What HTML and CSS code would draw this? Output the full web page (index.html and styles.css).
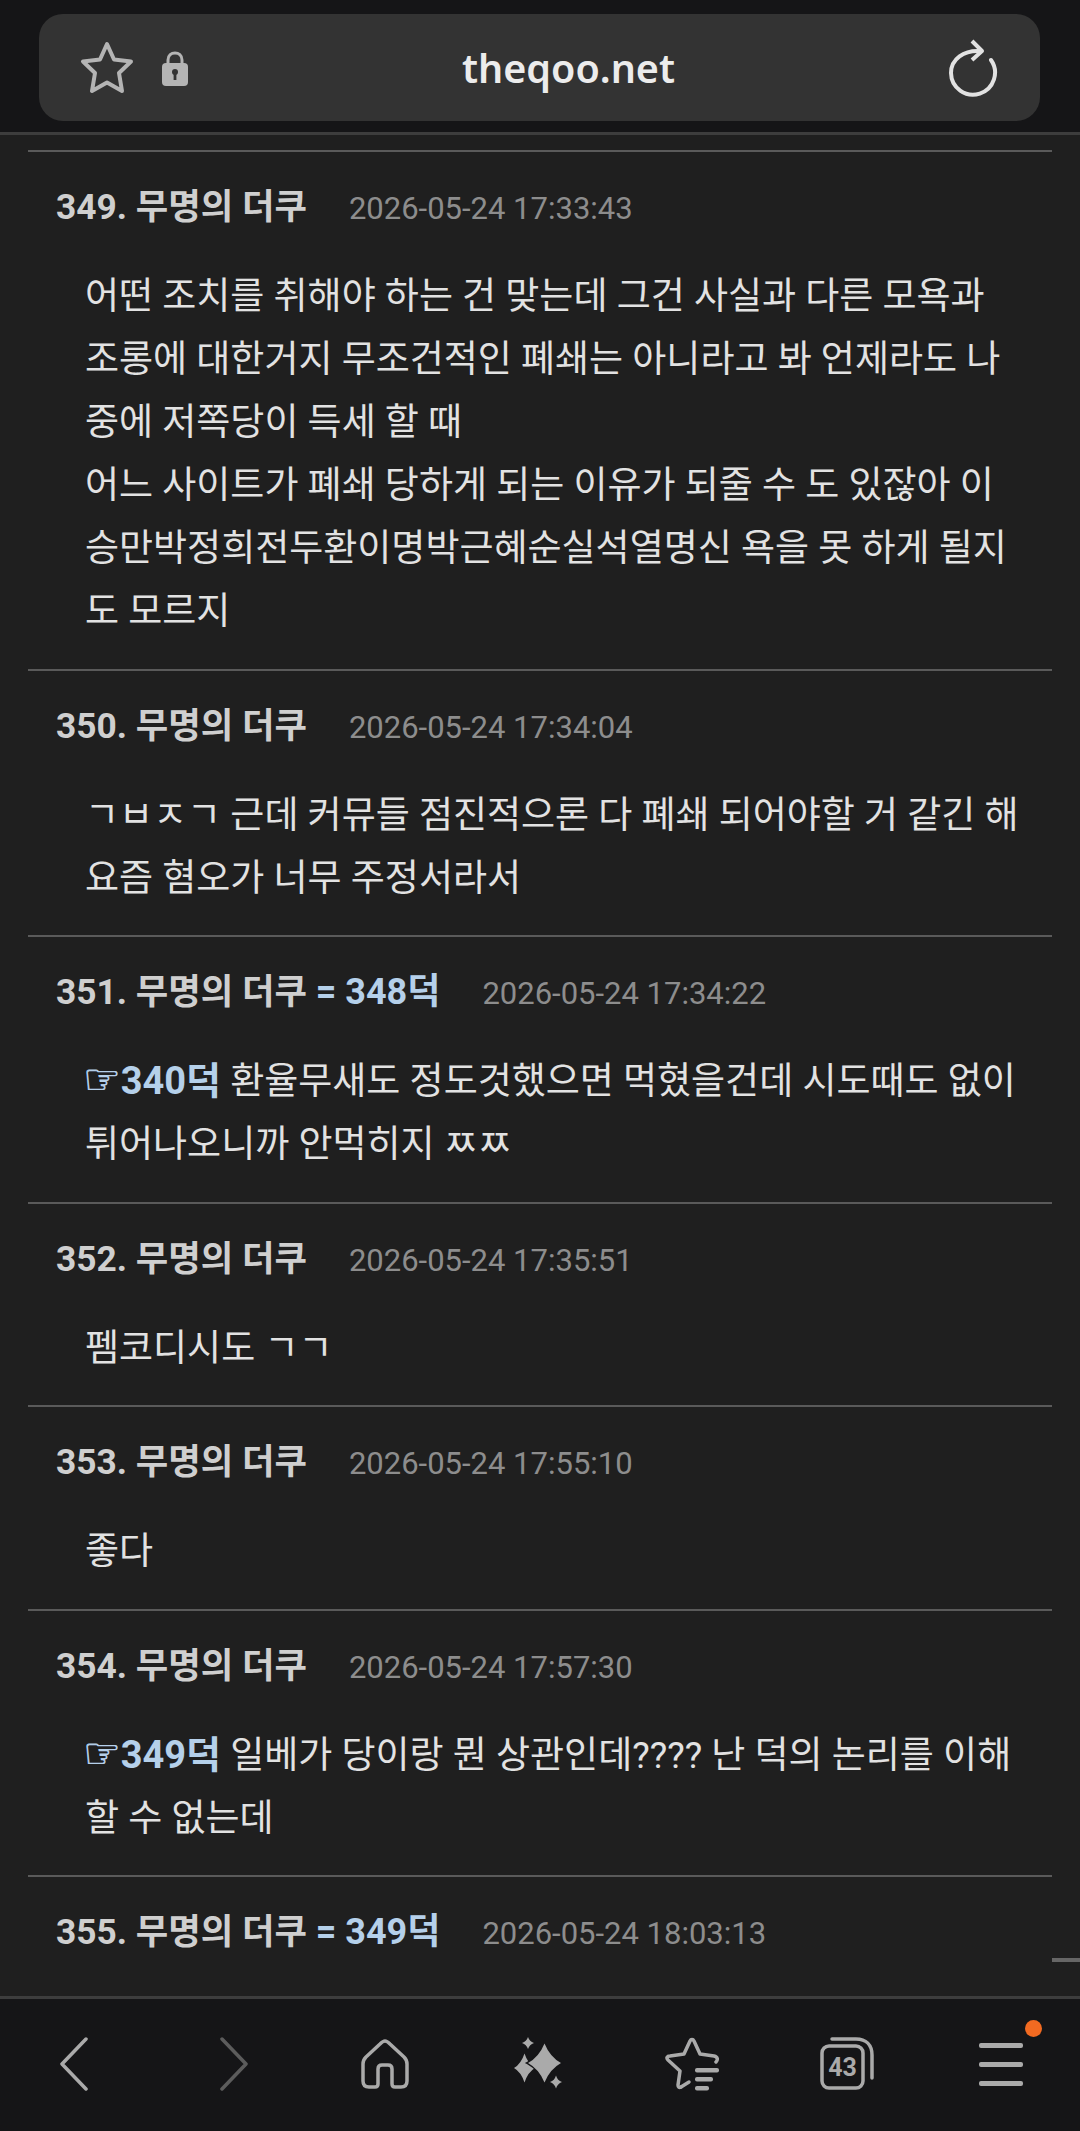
FILE: index.html
```html
<!DOCTYPE html>
<html lang="ko">
<head>
  <meta charset="UTF-8">
  <meta name="viewport" content="width=device-width, initial-scale=1.0">
  <title>theqoo.net</title>
  <link rel="stylesheet" href="styles.css">
</head>
<body>

  <header class="top-bar">
    <div class="address-bar">
      <svg class="icon-star" width="54" height="54" viewBox="0 0 54 54">
        <path d="M27 3 L34 18.5 L51 20.5 L39 32 L42 50 L27 41.5 L12 50 L15 32 L3 20.5 L20 18.5 Z" fill="none" stroke="#b4b4b4" stroke-width="4" stroke-linejoin="round"/>
      </svg>
      <svg class="icon-lock" width="26" height="36" viewBox="0 0 26 36">
        <path d="M6 15 V10 C6 0.5 20 0.5 20 10 V15" fill="none" stroke="#b4b4b4" stroke-width="3"/>
        <rect x="0" y="13" width="26" height="23" rx="4" fill="#b4b4b4"/>
        <circle cx="13" cy="22" r="3" fill="#333"/>
        <rect x="11.6" y="22" width="2.8" height="8" fill="#333"/>
      </svg>
      <span class="site-name">theqoo.net</span>
      <svg class="icon-reload" width="50" height="58" viewBox="0 0 50 58">
        <path d="M31 12 C15 11 2 20 2 34 A22 22 0 1 0 42 21" fill="none" stroke="#e2e2e2" stroke-width="4" stroke-linecap="round"/>
        <path d="M23 2 L33 12 L23 21" fill="none" stroke="#e2e2e2" stroke-width="4" stroke-linejoin="round"/>
      </svg>
    </div>
  </header>

  <main class="comments">
    <article class="comment">
      <div class="comment-head"><span class="author">349. 무명의 더쿠</span><span class="date">2026-05-24 17:33:43</span></div>
      <p class="comment-body">어떤 조치를 취해야 하는 건 맞는데 그건 사실과 다른 모욕과<br>조롱에 대한거지 무조건적인 폐쇄는 아니라고 봐 언제라도 나<br>중에 저쪽당이 득세 할 때<br>어느 사이트가 폐쇄 당하게 되는 이유가 되줄 수 도 있잖아 이<br>승만박정희전두환이명박근혜순실석열명신 욕을 못 하게 될지<br>도 모르지</p>
    </article>
    <article class="comment">
      <div class="comment-head"><span class="author">350. 무명의 더쿠</span><span class="date">2026-05-24 17:34:04</span></div>
      <p class="comment-body">ㄱㅂㅈㄱ 근데 커뮤들 점진적으론 다 폐쇄 되어야할 거 같긴 해<br>요즘 혐오가 너무 주정서라서</p>
    </article>
    <article class="comment">
      <div class="comment-head"><span class="author">351. 무명의 더쿠 <span class="ref">= 348덕</span></span><span class="date">2026-05-24 17:34:22</span></div>
      <p class="comment-body"><span class="ref"><span class="hand">☞</span>340덕</span> 환율무새도 정도것했으면 먹혔을건데 시도때도 없이<br>튀어나오니까 안먹히지 ㅉㅉ</p>
    </article>
    <article class="comment">
      <div class="comment-head"><span class="author">352. 무명의 더쿠</span><span class="date">2026-05-24 17:35:51</span></div>
      <p class="comment-body">펨코디시도 ㄱㄱ</p>
    </article>
    <article class="comment">
      <div class="comment-head"><span class="author">353. 무명의 더쿠</span><span class="date">2026-05-24 17:55:10</span></div>
      <p class="comment-body">좋다</p>
    </article>
    <article class="comment">
      <div class="comment-head"><span class="author">354. 무명의 더쿠</span><span class="date">2026-05-24 17:57:30</span></div>
      <p class="comment-body"><span class="ref"><span class="hand">☞</span>349덕</span> 일베가 당이랑 뭔 상관인데???? 난 덕의 논리를 이해<br>할 수 없는데</p>
    </article>
    <article class="comment">
      <div class="comment-head"><span class="author">355. 무명의 더쿠 <span class="ref">= 349덕</span></span><span class="date">2026-05-24 18:03:13</span></div>
    </article>
    <div class="scroll-thumb"></div>
  </main>

  <nav class="bottom-nav">
    <svg class="nav-back" width="30" height="54" viewBox="0 0 30 54">
      <path d="M27 2 L3 27 L27 52" fill="none" stroke="#aaa" stroke-width="3.5" stroke-linecap="round" stroke-linejoin="round"/>
    </svg>
    <svg class="nav-forward" width="30" height="54" viewBox="0 0 30 54">
      <path d="M3 2 L27 27 L3 52" fill="none" stroke="#5c5c5c" stroke-width="3.5" stroke-linecap="round" stroke-linejoin="round"/>
    </svg>
    <svg width="48" height="50" viewBox="0 0 48 50">
      <path d="M24 2 C22 2 21 3 19 5 L5 18 C3 20 2 22 2 25 V42 C2 46 4 48 8 48 H14 C16 48 17 47 17 45 V30 C17 27 19 26 21 26 H27 C29 26 31 27 31 30 V45 C31 47 32 48 34 48 H40 C44 48 46 46 46 42 V25 C46 22 45 20 43 18 L29 5 C27 3 26 2 24 2 Z" fill="none" stroke="#aaa" stroke-width="3.5" stroke-linejoin="round"/>
    </svg>
    <svg width="50" height="54" viewBox="0 0 50 54">
      <path d="M10.5 16.5 Q14 27 21 31 Q14 35 10.5 45.5 Q7 35 0 31 Q7 27 10.5 16.5 Z" fill="#aaa"/>
      <path d="M30.5 6.5 Q36 20 47 26 Q36 32 30.5 45.5 Q25 32 14 26 Q25 20 30.5 6.5 Z" fill="#aaa" stroke="#151517" stroke-width="3" paint-order="stroke"/>
      <path d="M14 0 Q15.5 4.5 20 6 Q15.5 7.5 14 12 Q12.5 7.5 8 6 Q12.5 4.5 14 0 Z" fill="#aaa"/>
      <path d="M42 38.5 Q43.5 43.5 48 45 Q43.5 46.5 42 51.5 Q40.5 46.5 36 45 Q40.5 43.5 42 38.5 Z" fill="#aaa"/>
    </svg>
    <svg width="56" height="54" viewBox="0 0 56 54">
      <path d="M16 50 C14 51 13 50 13 48 L15 34 L3 23 C1 21 2 19 5 19 L19 17 L25 4 C26 2 28 2 29 4 L35 17 L49 19 C53 20 53 23 51 25" fill="none" stroke="#aaa" stroke-width="3.5" stroke-linecap="round" stroke-linejoin="round"/>
      <path d="M16 50 L24 45" fill="none" stroke="#aaa" stroke-width="3.5" stroke-linecap="round"/>
      <rect x="30" y="31" width="24" height="4.5" rx="2" fill="#aaa"/>
      <rect x="30" y="40" width="18" height="4.5" rx="2" fill="#aaa"/>
      <rect x="30" y="49" width="14" height="4.5" rx="2" fill="#aaa"/>
    </svg>
    <svg width="54" height="54" viewBox="0 0 54 54">
      <path d="M12 2 H36 C46 2 52 8 52 18 V41" fill="none" stroke="#aaa" stroke-width="3.5" stroke-linecap="round"/>
      <rect x="2" y="9" width="41" height="42" rx="7" fill="#151517" stroke="#aaa" stroke-width="3.5"/>
      <text x="22.5" y="39" class="tab-count">43</text>
    </svg>
    <div class="menu-btn">
      <span class="menu-line"></span>
      <span class="menu-line"></span>
      <span class="menu-line"></span>
      <span class="menu-dot"></span>
    </div>
  </nav>

</body>
</html>
```

FILE: styles.css
```css
html, body {
  margin: 0;
  padding: 0;
}

body {
  width: 1080px;
  height: 2131px;
  display: flex;
  flex-direction: column;
  overflow: hidden;
  background-color: #1f1f1f;
  font-family: Roboto, 'Noto Sans CJK KR', sans-serif;
}

/* Browser address bar */
.top-bar {
  box-sizing: border-box;
  height: 135px;
  padding: 14px 40px 0 39px;
  background-color: #151517;
  border-bottom: 3px solid #3d3d3d;
}

.address-bar {
  display: flex;
  align-items: center;
  height: 107px;
  padding: 0 41px;
  background-color: #333333;
  border-radius: 24px;
}

.icon-lock {
  margin-left: 28px;
}

.site-name {
  flex: 1;
  text-align: center;
  color: #ececec;
  font-family: 'Noto Sans', sans-serif;
  font-weight: 600;
  font-size: 39.5px;
}

/* Comment list */
.comments {
  position: relative;
  flex: 1;
  overflow: hidden;
  padding: 15px 28px 0;
}

.comments::before {
  content: "";
  display: block;
  height: 2px;
  background-color: #5a5a5a;
}

.comment {
  border-bottom: 2px solid #5a5a5a;
  padding: 0 0 25.5px;
}

.comment-head {
  box-sizing: border-box;
  display: flex;
  align-items: baseline;
  height: 113px;
  padding: 35px 0 0 28px;
  line-height: 40px;
  white-space: nowrap;
}

.author {
  color: #cfcfcf;
  font-weight: 700;
  font-size: 35.3px;
}

.author .ref {
  font-size: 36px;
}

.date {
  margin-left: 42px;
  color: #8d8d8d;
  font-size: 31px;
}

.comment-body {
  margin: 0;
  padding-left: 57px;
  color: #e2e2e2;
  font-size: 37px;
  line-height: 63px;
  white-space: nowrap;
}

.ref {
  color: #b5d0ea;
  font-weight: 700;
}

.comment-body .ref {
  font-size: 38px;
}

.hand {
  margin-left: -2px;
  font-family: 'DejaVu Sans', sans-serif;
  font-weight: 700;
  font-size: 42px;
  line-height: 1;
  -webkit-text-stroke: 0.7px #b5d0ea;
}

.scroll-thumb {
  position: absolute;
  right: 0;
  top: 1823px;
  width: 28px;
  height: 4px;
  background-color: #666;
}

/* Bottom toolbar */
.bottom-nav {
  box-sizing: border-box;
  height: 135px;
  display: grid;
  grid-template-columns: repeat(7, 1fr);
  justify-items: center;
  align-items: center;
  background-color: #151517;
  border-top: 3px solid #3d3d3d;
  padding-bottom: 2px;
  padding-right: 2px;
}

.nav-back {
  margin-right: 6px;
}

.nav-forward {
  margin-left: 5px;
}

.tab-count {
  fill: #aaa;
  font-family: Roboto, sans-serif;
  font-weight: 700;
  font-size: 25px;
  text-anchor: middle;
}

.menu-btn {
  position: relative;
  display: flex;
  flex-direction: column;
  gap: 14px;
  width: 44px;
}

.menu-line {
  height: 5px;
  border-radius: 2px;
  background-color: #aaa;
}

.menu-dot {
  position: absolute;
  top: -23px;
  right: -19px;
  width: 17px;
  height: 17px;
  border-radius: 50%;
  background-color: #f26a21;
}
```
